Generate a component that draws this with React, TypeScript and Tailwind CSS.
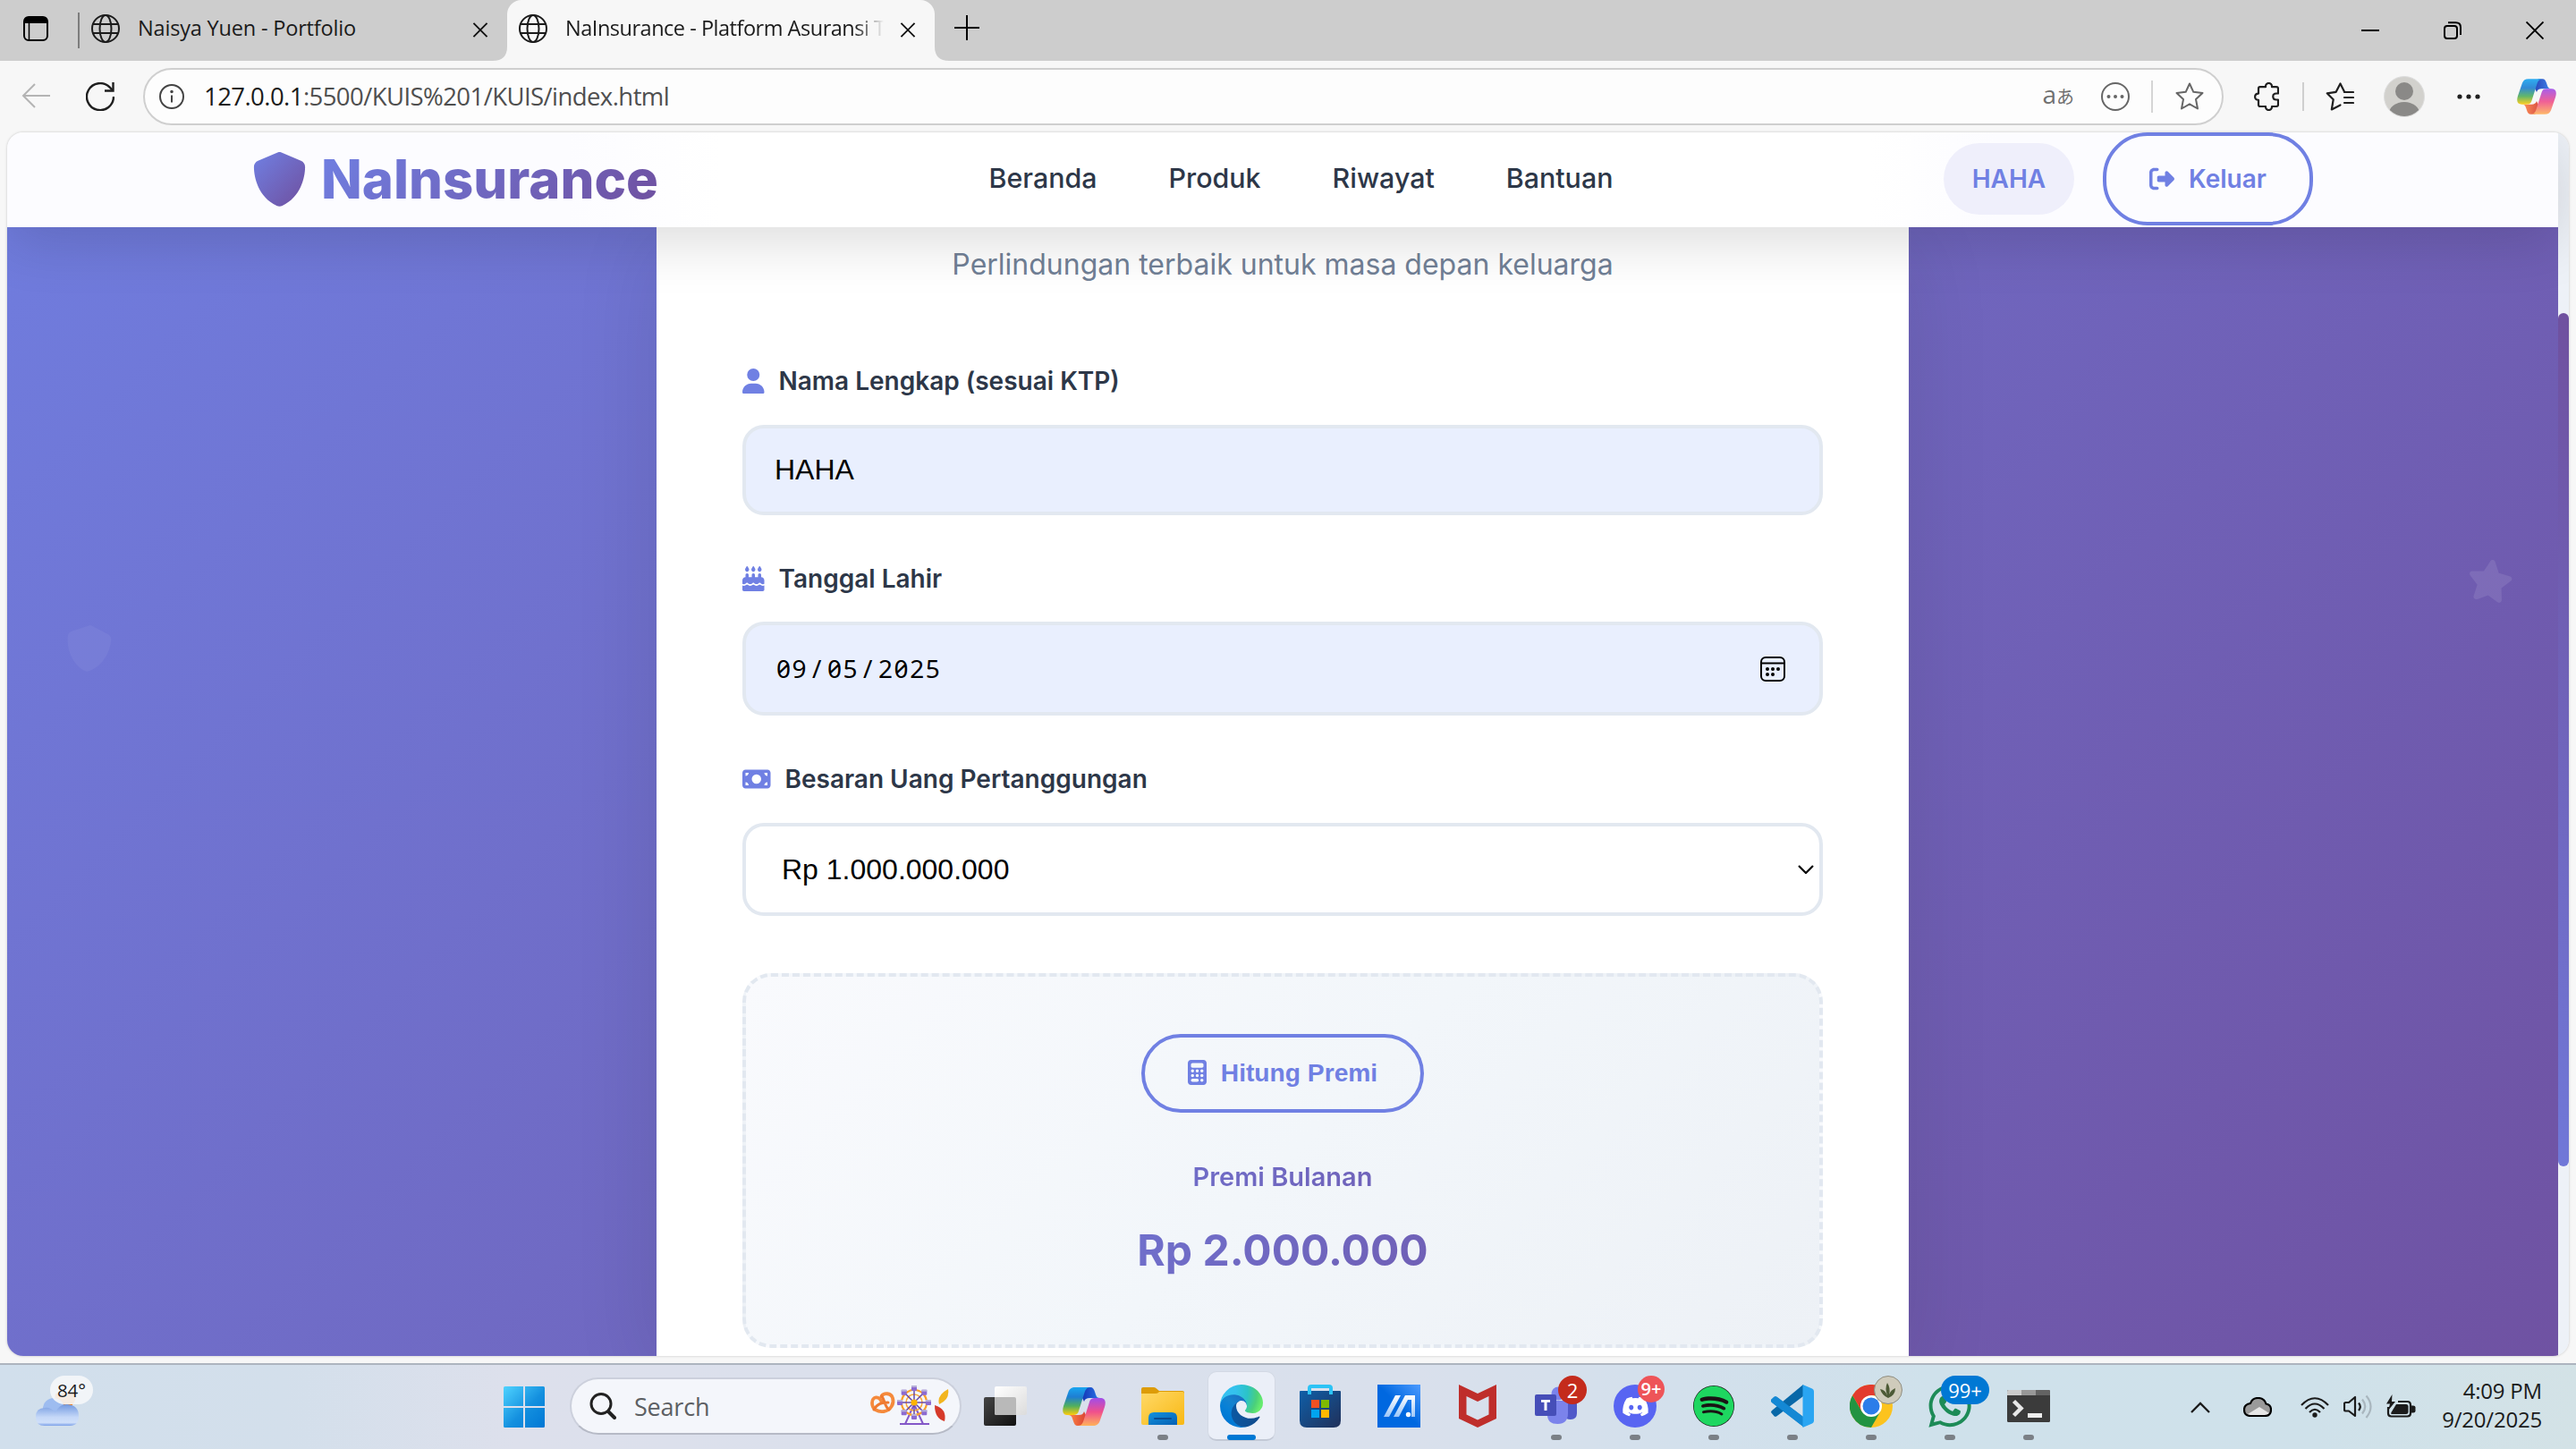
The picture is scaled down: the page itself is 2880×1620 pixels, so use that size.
import React from "react";
import {
  FaUser,
  FaCakeCandles,
  FaMoneyBill,
  FaCalculator,
  FaRightFromBracket,
  FaStar,
  FaDiscord,
  FaSpotify,
  FaWhatsapp,
} from "react-icons/fa6";

const SHIELD =
  "M256 0c4.6 0 9.2 1 13.4 2.9L457.7 82.8c22 9.3 38.4 31 38.3 57.2c-.5 99.2-41.3 280.7-213.6 363.2c-16.7 8-36.1 8-52.8 0C57.3 420.7 16.5 239.2 16 140c-.1-26.2 16.3-47.9 38.3-57.2L242.7 2.9C246.8 1 251.4 0 256 0z";

/* ---------- small line icons ---------- */

function Globe() {
  return (
    <svg viewBox="0 0 32 32" className="size-8 shrink-0" fill="none" stroke="#1b1b1b" strokeWidth="2">
      <circle cx="16" cy="16" r="15" />
      <ellipse cx="16" cy="16" rx="6.5" ry="15" />
      <path d="M2 11h28M2 21h28" />
    </svg>
  );
}

function Cross({ className }: { className: string }) {
  return (
    <svg viewBox="0 0 18 18" className={className} fill="none" stroke="#111" strokeWidth="2">
      <path d="M1 1l16 16M17 1L1 17" />
    </svg>
  );
}

function Copilot({ id, className }: { id: string; className: string }) {
  return (
    <svg viewBox="0 0 48 43" className={className}>
      <defs>
        <linearGradient id={id + "a"} x1="0" y1="0" x2="0" y2="1">
          <stop offset="0" stopColor="#19a5f0" />
          <stop offset=".35" stopColor="#1e7ed2" />
          <stop offset=".68" stopColor="#52b05c" />
          <stop offset="1" stopColor="#ffcb0b" />
        </linearGradient>
        <linearGradient id={id + "b"} x1="0" y1="0" x2="0" y2="1">
          <stop offset="0" stopColor="#a04dea" />
          <stop offset=".5" stopColor="#f0508c" />
          <stop offset="1" stopColor="#ffb25a" />
        </linearGradient>
        <linearGradient id={id + "c"} x1="0" y1="0" x2="1" y2="0">
          <stop offset="0" stopColor="#1330b0" />
          <stop offset="1" stopColor="#2a78ea" />
        </linearGradient>
        <linearGradient id={id + "d"} x1="0" y1="0" x2="1" y2="0">
          <stop offset="0" stopColor="#ff8a45" />
          <stop offset="1" stopColor="#d63c32" />
        </linearGradient>
      </defs>
      <path fill={`url(#${id}c)`} d="M26 0h5c3 0 4 2 5 5l1 3c1 3 2 4 5 4H30c-3 0-5 1-6 4L20 8z" />
      <path fill={`url(#${id}d)`} d="M22 43h-5c-3 0-4-2-5-5l-1-3c-1-3-2-4-5-4h12c3 0 5-1 6-4l4 8z" />
      <path fill={`url(#${id}a)`} d="M14 0H31C27 0 25.500 3 24.500 6L18 26.500C17 30 15 31 11.500 31H6C1 31-1 28 1 21L6.500 5C8 1.500 10 0 14 0Z" />
      <path fill={`url(#${id}b)`} d="M34 43H17C21 43 22.500 40 23.500 37L30 16.500C31 13 33 12 36.500 12H42C47 12 49 15 47 22L41.500 38C40 41.500 38 43 34 43Z" />
    </svg>
  );
}

/* ---------- browser chrome ---------- */

function TabStrip() {
  return (
    <div className="flex h-[68px] items-start bg-[#cdcdcd]">
      <div className="flex h-[68px] w-[567px] items-center">
        <svg viewBox="0 0 28 28" className="ml-[26px] mb-1 size-7 shrink-0">
          <rect x="1" y="1" width="26" height="26" rx="5" fill="none" stroke="#000" strokeWidth="2" />
          <path d="M1 8V5q0-4 4-4h18q4 0 4 4v3z" fill="#000" />
          <path d="M6.500 8v18" stroke="#000" strokeWidth="1.500" />
        </svg>
        <div className="ml-[33px] h-10 w-0.5 shrink-0 bg-[#7d7d7d]" />
        <div className="mb-1 ml-[13px] flex">
          <Globe />
        </div>
        <span className="mb-1 ml-[20px] w-[374px] whitespace-nowrap text-[23.500px] tracking-[-0.180px] text-[#1b1b1b]">Naisya Yuen - Portfolio</span>
        <Cross className="mb-0.5 h-[17px] w-[18px] shrink-0" />
      </div>
      <div className="relative flex h-[68px] w-[478px] items-center rounded-t-[16px] bg-[#f7f7f7]">
        <svg viewBox="0 0 16 16" className="absolute -left-4 bottom-0 size-4">
          <path d="M16 0v16H0Q16 16 16 0z" fill="#f7f7f7" />
        </svg>
        <svg viewBox="0 0 16 16" className="absolute -right-4 bottom-0 size-4">
          <path d="M0 0v16h16Q0 16 0 0z" fill="#f7f7f7" />
        </svg>
        <div className="mb-1 ml-[13px] flex">
          <Globe />
        </div>
        <span className="mb-1 ml-[20px] w-[356px] shrink-0 overflow-hidden whitespace-nowrap text-[23.500px] tracking-[-0.480px] text-[#1b1b1b] [mask-image:linear-gradient(to_right,#000_91%,transparent)]">
          NaInsurance - Platform Asuransi T
        </span>
        <Cross className="mb-0.5 ml-[18px] h-[17px] w-[18px] shrink-0" />
      </div>
      <svg viewBox="0 0 28 28" className="ml-[22px] mt-[17px] size-7" stroke="#000" strokeWidth="2">
        <path d="M14 0v28M0 14h28" />
      </svg>
      <div className="ml-auto flex h-[68px] items-center pr-9">
        <div className="h-0.5 w-5 bg-black" />
        <svg viewBox="0 0 20 20" className="ml-[72px] size-5" fill="none" stroke="#000" strokeWidth="2">
          <rect x="1" y="5" width="14" height="14" rx="3" />
          <path d="M5 1.200h8.500Q19 1.200 19 6.500V15" />
        </svg>
        <svg viewBox="0 0 20 20" className="ml-[72px] size-5" stroke="#000" strokeWidth="1.900">
          <path d="M.5.5l19 19M19.500.5l-19 19" />
        </svg>
      </div>
    </div>
  );
}

function Toolbar() {
  return (
    <div className="flex h-20 items-center bg-[#f7f7f7]">
      <svg viewBox="0 0 32 28" className="ml-6 mb-0.5 h-7 w-8 shrink-0" fill="none" stroke="#b4b4b4" strokeWidth="2">
        <path d="M15 1L2 14l13 13M2 14h30" />
      </svg>
      <svg viewBox="0 0 32 32" className="ml-10 size-8 shrink-0" fill="none" stroke="#1f1f1f" strokeWidth="2.400">
        <path d="M31 16A15 15 0 1 1 26.500 5.400L30 9" />
        <path d="M30.500 0v9.500H21" />
      </svg>
      <div className="ml-8 flex h-16 w-[2326px] shrink-0 items-center rounded-full border-2 border-[#cfcfcf] bg-[#fdfdfd]">
        <svg viewBox="0 0 28 28" className="ml-4 size-7 shrink-0" fill="none" stroke="#444" strokeWidth="2">
          <circle cx="14" cy="14" r="13" />
          <path d="M14 12.500v8" />
          <circle cx="14" cy="8.500" r="1" fill="#444" stroke="none" />
          <circle cx="14" cy="8.500" r=".8" />
        </svg>
        <span className="ml-[22px] whitespace-nowrap text-[27.500px] tracking-[-0.570px] text-[#4f4f4f]">
          <span className="text-[#1b1b1b]">127.0.0.1</span>:5500/KUIS%201/KUIS/index.html
        </span>
        <span className="ml-auto mb-1.5 flex items-baseline whitespace-nowrap text-[28px] text-[#707070]">
          <span>a</span>
          <span className="text-[20px] [font-family:'Noto_Sans_CJK_JP',sans-serif]">あ</span>
        </span>
        <svg viewBox="0 0 32 32" className="ml-[30px] size-8" fill="none" stroke="#666" strokeWidth="2">
          <circle cx="16" cy="16" r="15" />
          <g fill="#666" stroke="none">
            <circle cx="8.500" cy="16" r="2" />
            <circle cx="16" cy="16" r="2" />
            <circle cx="23.500" cy="16" r="2" />
          </g>
        </svg>
        <div className="ml-6 h-9 w-0.5 bg-[#d5d5d5]" />
        <svg viewBox="0 0 32 32" className="ml-[25px] mr-5 size-8" fill="none" stroke="#666" strokeWidth="2" strokeLinejoin="round">
          <path d="M16 1.500l4.300 9.300 10.200 1.200-7.500 7 2 10.500-9-5.200-9 5.200 2-10.500-7.500-7 10.200-1.200z" />
        </svg>
      </div>
      <svg viewBox="0 0 28 32" className="ml-[34px] h-8 w-7 shrink-0" fill="none" stroke="#1f1f1f" strokeWidth="2.200" strokeLinejoin="round">
        <path d="M5 7q0-1.800 1.800-1.800H13C12.600-.4 20.400-.4 20 5.200h5q2 0 2 1.800v5.500h-2c-5 0-5 7 0 7h2V25q0 2-2 2h-5c.400 5.400-7.400 5.400-7 0H7q-2 0-2-2v-5.200c-5.200 0-5.200-7.200 0-7.200z" />
      </svg>
      <div className="ml-[26px] h-8 w-0.5 bg-[#cfcfcf]" />
      <svg viewBox="0 0 32 32" className="ml-[24px] size-8 shrink-0" fill="none" stroke="#1f1f1f" strokeWidth="2.200" strokeLinejoin="round" strokeLinecap="round">
        <path d="M21 10.500L16.500 1.500l-4.800 9.300-10 1.500 7 7L6.800 30.500l9.700-5" />
        <path d="M21 11h10M21 17h10M21 23h10" />
      </svg>
      <svg viewBox="0 0 46 46" className="ml-[33px] size-[46px] shrink-0">
        <defs>
          <clipPath id="avatar">
            <circle cx="23" cy="23" r="22" />
          </clipPath>
        </defs>
        <circle cx="23" cy="23" r="22.500" fill="#d2d1cd" stroke="#dedede" />
        <g clipPath="url(#avatar)" fill="#8a8987">
          <circle cx="23" cy="17" r="10" />
          <ellipse cx="23" cy="42" rx="17" ry="13" />
        </g>
      </svg>
      <svg viewBox="0 0 26 6" className="ml-9 h-1.5 w-[26px] shrink-0" fill="#1f1f1f">
        <circle cx="3" cy="3" r="2.600" />
        <circle cx="13" cy="3" r="2.600" />
        <circle cx="23" cy="3" r="2.600" />
      </svg>
      <Copilot id="cpt" className="ml-[41px] h-10 w-11 shrink-0 opacity-90" />
    </div>
  );
}

/* ---------- web page ---------- */

function Navbar() {
  return (
    <nav className="relative z-10 flex h-[106px] items-center justify-between bg-[linear-gradient(to_right,#fcfcff_22%,#fff_28%,#fff_73%,#fcfcff_78%)] px-[274px] pb-0.5 shadow-[0_16px_64px_rgba(0,0,0,0.14)]">
      <div className="flex items-center gap-4">
        <svg viewBox="0 0 512 512" className="size-[61px]">
          <defs>
            <linearGradient id="logo" x1="0" y1="0" x2="1" y2="1">
              <stop offset="0" stopColor="#7080e3" />
              <stop offset="1" stopColor="#6f4f9e" />
            </linearGradient>
          </defs>
          <path d={SHIELD} fill="url(#logo)" />
        </svg>
        <span className="bg-[linear-gradient(135deg,#7080e3,#6f4f9e)] bg-clip-text text-[59.800px] font-extrabold leading-[80px] text-transparent">NaInsurance</span>
      </div>
      <div className="flex gap-20 text-[30.400px] font-medium text-[#2d3748]">
        <span>Beranda</span>
        <span>Produk</span>
        <span>Riwayat</span>
        <span>Bantuan</span>
      </div>
      <div className="flex items-center gap-8 text-[28px] font-semibold text-[#7080e3]">
        <span className="flex h-20 w-[146px] items-center justify-center rounded-[40px] bg-[#efeffb]">HAHA</span>
        <button className="flex h-[104px] w-[235px] items-center justify-center gap-4 rounded-[50px] border-4 border-[#7080e3]">
          <FaRightFromBracket className="size-7" />
          <span>Keluar</span>
        </button>
      </div>
    </nav>
  );
}

function Label({ icon, children }: { icon: React.ReactNode; children: React.ReactNode }) {
  return (
    <div className="flex h-11 items-center gap-4 text-[28px] font-semibold text-[#2d3748]">
      <span className="text-[28px] text-[#7080e3]">{icon}</span>
      <span>{children}</span>
    </div>
  );
}

function FormCard() {
  return (
    <div className="relative flex h-full w-[1400px] flex-col bg-white px-24 pt-4 shadow-[0_20px_90px_rgba(0,0,0,0.11)]">
      <p className="h-[52px] text-center text-[32px] leading-[52px] text-[#718096]">Perlindungan terbaik untuk masa depan keluarga</p>

      <div className="mt-[82px]">
        <Label icon={<FaUser className="h-7 w-[24.500px]" />}>Nama Lengkap (sesuai KTP)</Label>
        <div className="mt-[27px] flex h-[101px] items-center rounded-3xl border-4 border-[#e2e8f0] bg-[#e9effe] pb-0.5 pl-8 text-[32px] text-black [font-family:'Liberation_Sans',sans-serif]">HAHA</div>
      </div>

      <div className="mt-[49px]">
        <Label icon={<FaCakeCandles className="h-7 w-[24.500px]" />}>Tanggal Lahir</Label>
        <div className="mt-[26px] flex h-[105px] items-center justify-between rounded-3xl border-4 border-[#e2e8f0] bg-[#e9effe] pl-[34px] pr-[38px]">
          <div className="mb-0.5 flex text-[28px] tracking-[1.600px] text-black [font-family:'Noto_Sans',sans-serif] [font-feature-settings:'zero','tnum']">
            <span className="w-[35px]">09</span>
            <span className="w-[22px] text-center">/</span>
            <span className="w-[35px]">05</span>
            <span className="w-[22px] text-center">/</span>
            <span>2025</span>
          </div>
          <svg viewBox="0 0 28 28" className="size-7" fill="none" stroke="#000" strokeWidth="2">
            <rect x="1" y="1" width="26" height="26" rx="5" />
            <path d="M1 7.500h26" />
            <g fill="#000" stroke="none">
              <circle cx="8" cy="14" r="2" />
              <circle cx="14" cy="14" r="2" />
              <circle cx="20" cy="14" r="2" />
              <circle cx="8" cy="20" r="2" />
              <circle cx="14" cy="20" r="2" />
            </g>
          </svg>
        </div>
      </div>

      <div className="mt-[49px]">
        <Label icon={<FaMoneyBill className="h-7 w-[31.500px]" />}>Besaran Uang Pertanggungan</Label>
        <div className="mt-[27px] flex h-[104px] items-center justify-between rounded-3xl border-4 border-[#e2e8f0] bg-white pl-10 pr-1.5 text-[32px] text-black [font-family:'Liberation_Sans',sans-serif]">
          <span>Rp 1.000.000.000</span>
          <svg viewBox="0 0 18 10" className="h-2.5 w-[18px]" fill="none" stroke="#000" strokeWidth="2.200">
            <path d="M1 1l8 8 8-8" />
          </svg>
        </div>
      </div>

      <div className="mt-16 flex h-[419px] shrink-0 flex-col items-center rounded-[32px] border-4 border-dashed border-[#e2e8f0] bg-[linear-gradient(135deg,#f9fafd,#f2f6fa_50%,#edf1f6)] px-16 pt-16">
        <button className="flex h-[88px] w-[316px] shrink-0 items-center justify-center gap-4 rounded-full border-4 border-[#7080e3] pb-0.5 text-[28.200px] font-bold text-[#7080e3] [font-family:'Liberation_Sans',sans-serif]">
          <FaCalculator className="h-7 w-[21px]" />
          <span>Hitung Premi</span>
        </button>
        <p className="mt-[50px] w-full bg-[linear-gradient(135deg,#7080e3,#6f4f9e)] bg-clip-text text-center text-[29px] font-semibold leading-[44px] text-transparent">Premi Bulanan</p>
        <p className="mt-[30px] w-full bg-[linear-gradient(135deg,#7080e3,#6f4f9e)] bg-clip-text text-center text-[48px] font-bold leading-[60px] text-transparent">Rp 2.000.000</p>
      </div>
    </div>
  );
}

function WebPage() {
  return (
    <div className="mx-2 flex h-[1368px] overflow-hidden rounded-[18px] shadow-[0_0_3px_rgba(0,0,0,0.22)]">
      <div className="flex w-[2852px] flex-col">
        <Navbar />
        <main className="relative flex h-[1262px] justify-center overflow-hidden bg-[linear-gradient(135deg,#7080e3,#6f4f9e)] bg-[length:2852px_1962px] bg-[position:0_-396px]">
          <svg viewBox="0 0 512 512" className="absolute left-[65px] top-[445px] size-[52px] rotate-[5deg]">
            <path d={SHIELD} fill="#fff" fillOpacity=".05" />
          </svg>
          <FaStar className="absolute left-[2750px] top-[369px] size-[52px] rotate-[8deg] text-white/10" />
          <FormCard />
        </main>
      </div>
      <div className="w-3 bg-[#edf1f7] pt-[202px]">
        <div className="h-[954px] w-3 rounded-full bg-[linear-gradient(to_bottom,#6f519f,#7078d8)]" />
      </div>
    </div>
  );
}

/* ---------- taskbar ---------- */

function TaskItem({ dot, children }: { dot?: boolean; children: React.ReactNode }) {
  return (
    <div className="relative flex h-[94px] w-[88px] shrink-0 items-center justify-center pb-[2px]">
      {children}
      {dot && <div className="absolute bottom-[10px] left-[38px] h-1.5 w-3 rounded-full bg-[#7b8086]" />}
    </div>
  );
}

function TaskView() {
  return (
    <svg viewBox="0 0 48 44" className="h-11 w-12">
      <defs>
        <linearGradient id="tvd" x1="0" y1="0" x2="1" y2="1">
          <stop offset="0" stopColor="#454545" />
          <stop offset="1" stopColor="#111" />
        </linearGradient>
        <linearGradient id="tvl" x1="0" y1="0" x2="1" y2="1">
          <stop offset="0" stopColor="#fff" />
          <stop offset="1" stopColor="#dcdcdc" />
        </linearGradient>
      </defs>
      <rect x="0" y="12" width="36" height="32" rx="2" fill="url(#tvd)" />
      <rect x="12" y="0" width="36" height="32" rx="2" fill="url(#tvl)" />
      <path d="M12 12h22q2 0 2 2v18H14q-2 0-2-2z" fill="#b9b9b9" />
    </svg>
  );
}

function Explorer() {
  return (
    <svg viewBox="0 0 48 42" className="h-[42px] w-12">
      <defs>
        <linearGradient id="fld" x1="0" y1="0" x2="1" y2="1">
          <stop offset="0" stopColor="#ffd968" />
          <stop offset="1" stopColor="#f8b813" />
        </linearGradient>
        <linearGradient id="flb" x1="0" y1="0" x2="1" y2="1">
          <stop offset="0" stopColor="#1392dd" />
          <stop offset="1" stopColor="#0660b4" />
        </linearGradient>
      </defs>
      <path d="M0 2q0-2 2-2h12q2 0 3 1.500L20 4h26q2 0 2 2v6H0z" fill="#dd9c08" />
      <path d="M0 7h16q2 0 3-1l1-1h26q2 0 2 2v33q0 2-2 2H2q-2 0-2-2z" fill="url(#fld)" />
      <path d="M8 42v-8q0-6 6-6h20q6 0 6 6v8z" fill="url(#flb)" />
      <path d="M15 35h18" stroke="#0a4c92" strokeWidth="2" strokeLinecap="round" />
    </svg>
  );
}

function Edge() {
  return (
    <svg viewBox="0 0 256 256" className="size-12">
      <defs>
        <linearGradient id="eg1" x1="63" y1="178" x2="241" y2="178" gradientUnits="userSpaceOnUse">
          <stop offset="0" stopColor="#0c59a4" />
          <stop offset="1" stopColor="#114a8b" />
        </linearGradient>
        <linearGradient id="eg2" x1="157" y1="95" x2="45" y2="217" gradientUnits="userSpaceOnUse">
          <stop offset="0" stopColor="#1b6fc2" />
          <stop offset=".4" stopColor="#1583cf" />
          <stop offset=".7" stopColor="#0680d7" />
          <stop offset="1" stopColor="#0078d4" />
        </linearGradient>
        <radialGradient id="eg3" cx="30" cy="50" r="230" gradientUnits="userSpaceOnUse">
          <stop offset="0" stopColor="#35c1f1" />
          <stop offset=".3" stopColor="#34c1ed" />
          <stop offset=".6" stopColor="#2bc3c8" />
          <stop offset=".85" stopColor="#4bd07a" />
          <stop offset="1" stopColor="#66eb6e" />
        </radialGradient>
      </defs>
      <g transform="translate(-4.630 -4.920)">
        <path fill="url(#eg1)" d="M235.680 195.460a93.730 93.730 0 0 1-10.540 4.710 101.870 101.870 0 0 1-35.900 6.460c-47.320 0-88.540-32.550-88.540-74.320A31.480 31.480 0 0 1 117.130 105c-42.800 1.800-53.800 46.400-53.800 72.530 0 73.880 68.090 81.370 82.760 81.370 7.910 0 19.840-2.300 27-4.560l1.310-.44a128.340 128.340 0 0 0 66.600-52.800 4 4 0 0 0-5.320-5.640z" />
        <path fill="url(#eg2)" d="M110.340 246.340A79.200 79.200 0 0 1 87.600 225a80.720 80.720 0 0 1 29.530-120c3.120-1.470 8.450-4.130 15.540-4a32.350 32.350 0 0 1 25.690 13 31.880 31.880 0 0 1 6.360 18.660c0-.21 24.460-79.600-80-79.600-43.900 0-80 41.660-80 78.210a130.150 130.150 0 0 0 12.110 56 128 128 0 0 0 156.380 67.110 75.550 75.550 0 0 1-62.780-8z" />
        <path fill="url(#eg3)" d="M156.940 153.780c-.81 1.050-3.300 2.500-3.300 5.660 0 2.610 1.700 5.120 4.720 7.230 14.380 10 41.490 8.680 41.560 8.680a59.560 59.560 0 0 0 30.270-8.350 61.380 61.380 0 0 0 30.430-52.880c.26-22.410-8-37.310-11.340-43.910-21.190-41.440-66.930-65.300-116.670-65.300a128 128 0 0 0-128 126.200c.48-36.540 36.800-66.050 80-66.050 3.500 0 23.460.34 42 10.070 16.340 8.580 24.900 18.940 30.850 29.210 6.180 10.670 7.280 24.150 7.280 29.520s-2.740 13.330-7.800 19.900z" />
      </g>
    </svg>
  );
}

function Store() {
  return (
    <svg viewBox="0 0 46 48" className="h-12 w-[46px]">
      <defs>
        <linearGradient id="st" x1="0" y1="0" x2="1" y2="1">
          <stop offset="0" stopColor="#0f5fa8" />
          <stop offset="1" stopColor="#20305a" />
        </linearGradient>
      </defs>
      <path d="M0 8q0-1 1-1h44q1 0 1 1v32q0 8-8 8H8q-8 0-8-8z" fill="url(#st)" />
      <path d="M11 11V4q0-2 2-2h20q2 0 2 2v7" fill="none" stroke="#2cc3f5" strokeWidth="4" />
      <path d="M13 17h9v9h-9z" fill="#f25022" />
      <path d="M24 17h9v9h-9z" fill="#7fba00" />
      <path d="M13 28h9v9h-9z" fill="#00a4ef" />
      <path d="M24 28h9v9h-9z" fill="#ffb900" />
    </svg>
  );
}

function MyAsus() {
  return (
    <svg viewBox="0 0 48 48" className="size-12">
      <defs>
        <linearGradient id="as" x1="1" y1="0" x2=".5" y2=".5">
          <stop offset="0" stopColor="#4d9bff" />
          <stop offset="1" stopColor="#0068e0" />
        </linearGradient>
        <linearGradient id="asw" x1="0" y1="0" x2="0" y2="1">
          <stop offset="0" stopColor="#fff" />
          <stop offset="1" stopColor="#9cc6f8" />
        </linearGradient>
      </defs>
      <path d="M0 0h48v48H0z" fill="url(#as)" />
      <path d="M7 36L20 12h6L13 36zM18 36L31 12h11v24h-4V17h-4L24 36z" fill="url(#asw)" />
      <circle cx="34.500" cy="33.500" r="2.700" fill="#fff" />
    </svg>
  );
}

function Teams() {
  return (
    <svg viewBox="0 0 48 44" className="h-11 w-12">
      <circle cx="40" cy="9" r="5" fill="#5059c9" />
      <path d="M32 15h15v15q0 7-7 7-6 0-8-5z" fill="#5059c9" />
      <circle cx="26" cy="8" r="7.500" fill="#7b83eb" />
      <path d="M14 16h23v14q0 12-11.500 12T14 32z" fill="#7b83eb" />
      <rect x="0" y="9" width="24" height="24" rx="2" fill="#464eb8" />
      <path d="M7 15h10v2.800h-3.500V27h-3v-9.200H7z" fill="#fff" />
    </svg>
  );
}

function VSCode() {
  return (
    <svg viewBox="0 0 48 48" className="size-12">
      <path d="M0 17l3.500-3.200q1.500-1 3 0L36 36v11L1 20q-1.500-1.500-1-3z" fill="#1080c9" />
      <path d="M0 31l3.500 4.200q1.500 1 3 0L36 13V0L1 29q-1 1-1 2z" fill="#0868a8" />
      <path d="M0 17l3.500-3.200q1.500-1 3 0L36 36v11L1 20q-1.500-1.500-1-3z" fill="#1488d4" />
      <path d="M35.500 0L46 4.500q2 1 2 3v33q0 2-2 3L35.500 48z" fill="#2aa5f2" />
    </svg>
  );
}

function Chrome() {
  return (
    <svg viewBox="0 0 48 48" className="size-12">
      <circle cx="24" cy="24" r="24" fill="#fcc31e" />
      <path d="M24 24L3.200 12A24 24 0 0 1 44.800 12H24z" fill="#e33b2e" />
      <path d="M3.200 12A24 24 0 0 0 24 48L34.400 30 24 24 13.600 30z" fill="#229342" />
      <path d="M3.200 12L13.600 30 24 24 24 12z" fill="#e33b2e" />
      <circle cx="24" cy="24" r="12" fill="#fff" />
      <circle cx="24" cy="24" r="9.500" fill="#2b7de9" />
    </svg>
  );
}

function Terminal() {
  return (
    <svg viewBox="0 0 48 36" className="h-9 w-12">
      <rect width="48" height="36" rx="1.500" fill="#3b3b3b" />
      <path d="M1.500 0H16v6H0V1.500Q0 0 1.500 0z" fill="#ccc" />
      <path d="M16 0h16v6H16z" fill="#989898" />
      <path d="M32 0h14.500Q48 0 48 1.500V6H32z" fill="#636363" />
      <path d="M7.500 12.500l8 8-8 8" fill="none" stroke="#e8e8e8" strokeWidth="4.500" />
      <rect x="23" y="26" width="16" height="5" fill="#eee" />
    </svg>
  );
}

function FestiveArt() {
  const cabins = [0, 45, 90, 135, 180, 225, 270, 315];
  return (
    <svg viewBox="0 0 88 46" className="h-[46px] w-[88px]">
      <g fill="none" stroke="#f58a3c" strokeWidth="3.800" strokeLinecap="round" strokeLinejoin="round">
        <path d="M13 19C10 11 2 12 2 19.500 2 27 9 30 15 29 23 28 27 20 25 14 23 8 15 8 12.500 12" />
        <path d="M12.500 12C16 15 16 24 21 27M4 27C8 20 13 19 20 19" stroke="#ef7a30" strokeWidth="3" />
      </g>
      <g transform="translate(49 19)">
        <path d="M0 2L-10 24M0 2L10 24M-16 24H17" stroke="#8458c8" strokeWidth="2" />
        <circle r="14" fill="none" stroke="#f99f2a" strokeWidth="2.200" />
        <circle r="9" fill="none" stroke="#f9a93a" strokeWidth="1.500" />
        {cabins.map((a) => (
          <g key={a} transform={`rotate(${a})`}>
            <path d="M0 0V-13" stroke="#5d3fa8" strokeWidth="1.400" />
            <g transform={`translate(0 -16) rotate(${-a})`}>
              <rect x="-3" y="-3" width="6" height="6" rx="1" fill="#8d6bd0" />
              <rect x="-3" y="-3" width="6" height="2" fill="#b8b0d8" />
            </g>
          </g>
        ))}
        <circle r="3.600" fill="#ffb400" />
      </g>
      <path d="M77 21q-3-10 10-17 2 12-10 17z" fill="#f2b51f" />
      <path d="M72 22q14 4 11 18-11-3-11-18z" fill="#d63a2a" />
    </svg>
  );
}

function Weather() {
  return (
    <div className="relative h-[94px] w-[120px] shrink-0">
      <svg viewBox="0 0 48 36" className="absolute left-[40px] top-[32px] h-9 w-12">
        <defs>
          <linearGradient id="wc" x1="0" y1="0" x2="0" y2="1">
            <stop offset="0" stopColor="#7299e0" />
            <stop offset=".6" stopColor="#c5d8f8" />
            <stop offset=".85" stopColor="#cfdffa" />
            <stop offset="1" stopColor="#7a9fe8" />
          </linearGradient>
        </defs>
        <circle cx="33" cy="4" r="11.500" fill="#f27c13" />
        <circle cx="20" cy="17" r="12" fill="#9dbcf0" />
        <path d="M10 16q6-1 12 5 4-9 13-9 13 1 13 13 0 11-10 11H10Q0 36 0 26t10-10z" fill="url(#wc)" />
      </svg>
      <div className="absolute left-[56px] top-[12px] flex h-8 w-12 items-center justify-center rounded-full bg-[#f5f7fa]/90 text-[20.500px] text-[#1b1b1b]">84°</div>
    </div>
  );
}

function Tray() {
  return (
    <div className="ml-auto flex h-[94px] items-center">
      <svg viewBox="0 0 22 13" className="h-[13px] w-[22px]" fill="none" stroke="#1b1b1b" strokeWidth="2.300">
        <path d="M1 12L11 2l10 10" />
      </svg>
      <svg viewBox="0 0 32 22" className="ml-[37px] h-[22px] w-8">
        <path d="M8 7Q10 1 16.500 1q7 0 9 6.500 5.500 1 5.500 6.500 0 7-7 7H8q-7 0-7-7 0-6 7-7z" fill="#9a9a9a" />
        <path d="M5 19l13-8 11 7q-2 3-5 3H8q-2 0-3-2z" fill="#e6e6e6" />
        <path d="M8 7Q10 1 16.500 1q7 0 9 6.500 5.500 1 5.500 6.500 0 7-7 7H8q-7 0-7-7 0-6 7-7z" fill="none" stroke="#000" strokeWidth="2.200" />
      </svg>
      <svg viewBox="0 0 32 23" className="ml-8 h-[23px] w-8" fill="none" stroke="#1b1b1b" strokeWidth="2.200">
        <path d="M1 9Q16-6.500 31 9M5.500 13Q16 2 26.500 13M10 17Q16 10.500 22 17" />
        <circle cx="16" cy="20" r="2.700" fill="#1b1b1b" stroke="none" />
      </svg>
      <svg viewBox="0 0 32 28" className="ml-4 h-7 w-8" fill="none" stroke="#1b1b1b" strokeWidth="2.200">
        <path d="M1 10.500Q1 9 2.500 9H6l7-6v21l-7-5.500H2.500Q1 18.500 1 17z" strokeLinejoin="round" />
        <path d="M17 9.500q3.500 4 0 8.500" />
        <path d="M21 5.500q6.500 8 0 16M25.500 1.500q10 12 0 24.500" stroke="#a9b6be" />
      </svg>
      <svg viewBox="0 0 33 27" className="mb-0.5 ml-4 h-[27px] w-[33px]">
        <path d="M2 14v7q0 3.500 3.500 3.500h18Q27 24.500 27 21v-9q0-4-3.500-4H13" fill="none" stroke="#1b1b1b" strokeWidth="2.200" />
        <path d="M11 11h11q2.500 0 2.500 2.500V20q0 2-2.500 2H6.500q-2 0-1-2z" fill="#1b1b1b" />
        <path d="M28 12.500h2q2.500 0 2.500 2v4q0 2-2.500 2h-2z" fill="#1b1b1b" />
        <path d="M6.500 0L0 10.500h4L2 18l8-10H6z" fill="#1b1b1b" />
      </svg>
      <div className="mb-1 ml-[22px] mr-[38px] w-[119px] whitespace-nowrap text-right text-[24px] leading-8 tracking-[-0.200px] text-[#1b1b1b]">
        <div>4:09 PM</div>
        <div>9/20/2025</div>
      </div>
    </div>
  );
}

function Taskbar() {
  return (
    <div className="flex h-24 items-center border-t-2 border-[#adb4bf] bg-[linear-gradient(to_right,#d1dfec,#d3dfeb_11%,#dde0ec_20%,#dae0ec_38%,#d9e0ec_55%,#d3e0ec_65%,#cfe1eb_75%,#cfe1ea_90%,#d3e2e6)]">
      <Weather />
      <svg viewBox="0 0 46 46" className="ml-[443px] size-[46px] shrink-0">
        <defs>
          <linearGradient id="wn" x1="0" y1="0" x2="46" y2="46" gradientUnits="userSpaceOnUse">
            <stop offset="0" stopColor="#4fd3ff" />
            <stop offset=".55" stopColor="#1490df" />
            <stop offset="1" stopColor="#0077d4" />
          </linearGradient>
        </defs>
        <path d="M1.500 0H22v22H0V1.500Q0 0 1.500 0zM24 0h20.500Q46 0 46 1.500V22H24zM0 24h22v22H1.500Q0 46 0 44.500zM24 24h22v20.500q0 1.500-1.500 1.500H24z" fill="url(#wn)" />
      </svg>
      <div className="ml-7 mt-[-2px] flex h-16 w-[438px] shrink-0 items-center rounded-full border-2 border-[#ccd0dc] border-b-[#b6bac6] bg-[#f4f6fb]">
        <svg viewBox="0 0 30 30" className="ml-[20px] size-[30px]" fill="none" stroke="#222" strokeLinecap="round">
          <circle cx="13" cy="12.500" r="11" strokeWidth="3" />
          <path d="M21.500 21.500L28 28" strokeWidth="4" />
        </svg>
        <span className="ml-[20px] mt-0.5 text-[27px] tracking-[-0.200px] text-[#5c5f63]">Search</span>
        <div className="ml-auto mr-[12px]">
          <FestiveArt />
        </div>
      </div>
      <div className="ml-[5px] flex">
        <TaskItem>
          <TaskView />
        </TaskItem>
        <TaskItem>
          <Copilot id="cpb" className="h-[43px] w-12" />
        </TaskItem>
        <TaskItem dot>
          <Explorer />
        </TaskItem>
        <TaskItem>
          <div className="absolute left-[6px] top-[7px] h-[78px] w-[76px] rounded-[10px] border border-[#d3d9e4] border-b-2 border-b-[#c3c9d6] bg-[#ebeff8]" />
          <div className="relative">
            <Edge />
          </div>
          <div className="absolute bottom-[10px] left-[28px] h-1.5 w-8 rounded-full bg-[#0078d4]" />
        </TaskItem>
        <TaskItem>
          <Store />
        </TaskItem>
        <TaskItem>
          <MyAsus />
        </TaskItem>
        <TaskItem>
          <svg viewBox="0 0 42 48" className="h-12 w-[42px]">
            <path d="M0 0l21 10L42 0v38L21 48 0 38zM8.500 13v20.500L21 39.500l12.500-6V13L21 19z" fill="#bf2e2b" fillRule="evenodd" />
          </svg>
        </TaskItem>
        <TaskItem dot>
          <Teams />
          <div className="absolute left-[46px] top-[12px] flex size-8 items-center justify-center rounded-full bg-[#c42b1c] text-[22px] text-white">2</div>
        </TaskItem>
        <TaskItem dot>
          <div className="flex size-12 items-center justify-center rounded-full bg-[#5865f2]">
            <FaDiscord className="size-[31px] text-white" />
          </div>
          <div className="absolute left-[47px] top-[12px] flex size-[30px] items-center justify-center rounded-full bg-[#ee5458] text-[20px] font-semibold text-white">9+</div>
        </TaskItem>
        <TaskItem dot>
          <div className="flex size-[46px] items-center justify-center rounded-full bg-[#191414]">
            <FaSpotify className="size-[46px] text-[#1ed760]" />
          </div>
        </TaskItem>
        <TaskItem dot>
          <VSCode />
        </TaskItem>
        <TaskItem dot>
          <Chrome />
          <svg viewBox="0 0 32 32" className="absolute left-[47px] top-[12px] size-8">
            <circle cx="16" cy="16" r="15.500" fill="#cfcbbb" stroke="#8f8d80" />
            <path d="M16 25q-7-3-9-10 6 1 8 7-3-8 0-14 4 6 2 13 2-5 7-7 0 8-8 11z" fill="#4d5a36" />
          </svg>
        </TaskItem>
        <TaskItem dot>
          <FaWhatsapp className="size-[54px] text-[#1d8b57]" />
          <div className="absolute left-[34px] top-[12px] flex h-8 w-[54px] items-center justify-center rounded-full bg-[#0078d4] text-[22px] text-white">99+</div>
        </TaskItem>
        <TaskItem dot>
          <Terminal />
        </TaskItem>
      </div>
      <Tray />
    </div>
  );
}

export default function App() {
  return (
    <div className="flex h-[1620px] w-[2880px] flex-col overflow-hidden bg-[#f7f7f7] [font-family:'Open_Sans',sans-serif]">
      <TabStrip />
      <Toolbar />
      <div className="h-[1376px] [font-family:Inter,sans-serif]">
        <WebPage />
      </div>
      <Taskbar />
    </div>
  );
}
